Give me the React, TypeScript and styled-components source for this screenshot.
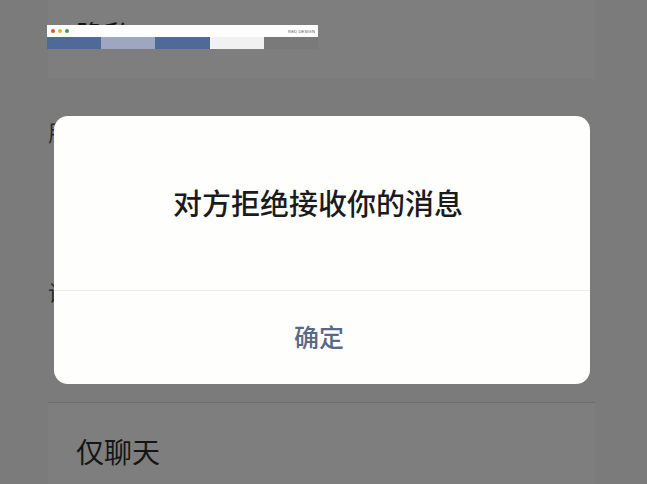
import styled, { createGlobalStyle } from "styled-components";

const GlobalStyle = createGlobalStyle`
  html, body {
    margin: 0;
    padding: 0;
    background: #7b7b7b;
    font-family: "Noto Sans CJK SC", "Noto Sans", sans-serif;
  }
`;

const Page = styled.div`
  position: relative;
  width: 647px;
  height: 484px;
  overflow: hidden;
  background: #7b7b7b;
`;

const Column = styled.div`
  display: flex;
  flex-direction: column;
  margin: 0 52px 0 48px;
`;

const Card = styled.div<{ $height: number; $top: number }>`
  display: flex;
  align-items: flex-start;
  box-sizing: border-box;
  height: ${(p) => p.$height}px;
  padding: ${(p) => p.$top}px 0 0 28px;
  background: #7e7e7e;
`;

const RowText = styled.span`
  font-size: 28px;
  color: #151515;
  line-height: 1;
`;

const SectionLabel = styled.div<{ $top: number }>`
  margin-top: ${(p) => p.$top}px;
  font-size: 22px;
  line-height: 26px;
  color: #2a2a2a;
`;

const Divider = styled.div`
  height: 1px;
  background: #6c6c6c;
`;

const Strip = styled.div`
  position: absolute;
  left: 47px;
  top: 25px;
  width: 271px;
  display: flex;
  flex-direction: column;
`;

const StripBar = styled.div`
  display: flex;
  align-items: center;
  height: 12px;
  padding: 0 3px 0 4px;
  background: #fdfdfd;
  gap: 3px;
`;

const Dot = styled.span<{ $color: string }>`
  width: 4px;
  height: 4px;
  border-radius: 50%;
  background: ${(p) => p.$color};
`;

const StripLabel = styled.span`
  margin-left: auto;
  font-family: "Liberation Sans", Arial, sans-serif;
  font-size: 4px;
  letter-spacing: 0.2px;
  color: #555;
`;

const Swatches = styled.div`
  display: flex;
  height: 12px;
`;

const Swatch = styled.div<{ $color: string }>`
  flex: 1;
  background: ${(p) => p.$color};
`;

const Overlay = styled.div`
  position: absolute;
  left: 54px;
  top: 116px;
`;

const Modal = styled.div`
  width: 536px;
  height: 268px;
  display: flex;
  flex-direction: column;
  border-radius: 14px;
  background: #fefefc;
  overflow: hidden;
`;

const Message = styled.div`
  height: 175px;
  display: flex;
  align-items: center;
  justify-content: center;
  padding: 0 8px 3px 0;
  box-sizing: border-box;
  border-bottom: 1px solid #ececea;
  font-size: 29px;
  font-weight: 500;
  color: #1b1b1b;
`;

const Confirm = styled.button`
  flex: 1;
  border: none;
  background: transparent;
  font-family: inherit;
  font-size: 25px;
  font-weight: 500;
  color: #5a6888;
  padding: 0 6px 3px 0;
`;

export default function App() {
  return (
    <Page>
      <GlobalStyle />
      <Column>
        <Card $height={79} $top={20}>
          <RowText>隐私</RowText>
        </Card>
        <SectionLabel $top={39}>朋友权限</SectionLabel>
        <SectionLabel $top={134}>设置朋友权限</SectionLabel>
        <div style={{ height: 98 }} />
        <Divider />
        <Card $height={82} $top={34}>
          <RowText>仅聊天</RowText>
        </Card>
      </Column>

      <Strip>
        <StripBar>
          <Dot $color="#d9533d" />
          <Dot $color="#e9b13a" />
          <Dot $color="#3aa346" />
          <StripLabel>RED DESIGN</StripLabel>
        </StripBar>
        <Swatches>
          <Swatch $color="#506a98" />
          <Swatch $color="#9ea7c1" />
          <Swatch $color="#506a98" />
          <Swatch $color="#f1f1f1" />
          <Swatch $color="#7a7a7a" />
        </Swatches>
      </Strip>

      <Overlay>
        <Modal>
          <Message>对方拒绝接收你的消息</Message>
          <Confirm>确定</Confirm>
        </Modal>
      </Overlay>
    </Page>
  );
}
